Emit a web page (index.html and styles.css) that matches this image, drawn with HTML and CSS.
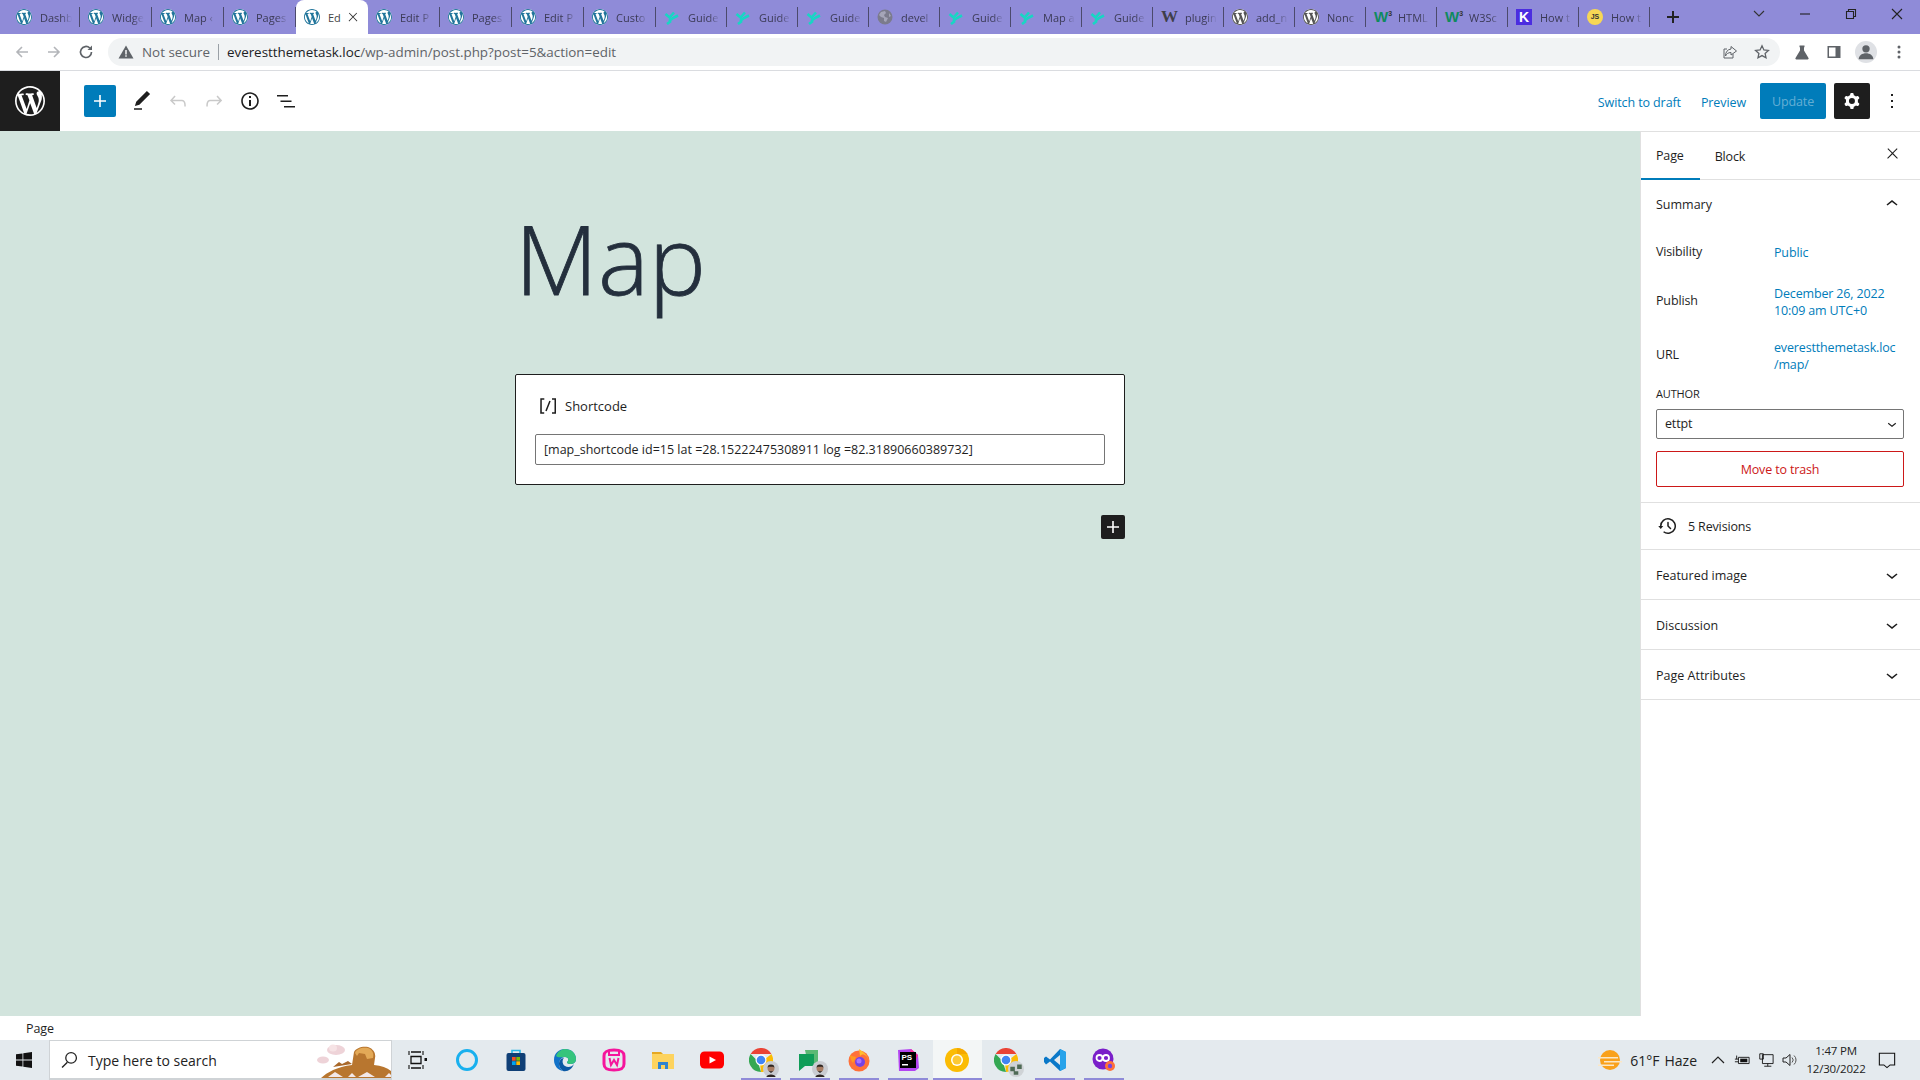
FILE: index.html
```html
<!DOCTYPE html>
<html lang="en">
<head>
    <meta charset="UTF-8">
    <title>Edit Page - Map</title>
    <link rel="stylesheet" href="styles.css">
</head>
<body>
    <svg class="sprites" width="0" height="0">
        <symbol id="i-wp" viewBox="0 0 20 20"><path d="M20 10c0-5.51-4.49-10-10-10C4.48 0 0 4.49 0 10c0 5.52 4.48 10 10 10 5.51 0 10-4.48 10-10zM7.78 15.37L4.37 6.22c.55-.02 1.17-.08 1.17-.08.5-.06.44-1.13-.06-1.11 0 0-1.45.11-2.37.11-.18 0-.37 0-.58-.01C4.12 2.69 6.87 1.11 10 1.11c2.33 0 4.45.87 6.05 2.34-.68-.11-1.65.39-1.65 1.58 0 .74.45 1.36.9 2.1.35.61.55 1.36.55 2.46 0 1.49-1.4 5-1.4 5l-3.03-8.37c.54-.02.82-.17.82-.17.5-.05.44-1.25-.06-1.22 0 0-1.44.12-2.38.12-.87 0-2.33-.12-2.33-.12-.5-.03-.56 1.2-.06 1.22l.92.08 1.26 3.41zM17.41 10c.24-.64.74-1.87.43-4.25.7 1.29 1.05 2.71 1.05 4.25 0 3.29-1.73 6.24-4.4 7.78.97-2.59 1.94-5.2 2.92-7.78zM6.1 18.09C3.12 16.65 1.11 13.53 1.11 10c0-1.3.23-2.48.72-3.59C3.25 10.3 4.67 14.2 6.1 18.09zm4.03-6.63l2.58 6.98c-.86.29-1.76.45-2.71.45-.79 0-1.57-.11-2.29-.33.81-2.38 1.62-4.74 2.42-7.1z"/></symbol>
        <symbol id="i-wpfav" viewBox="0 0 20 20"><circle cx="10" cy="10" r="10" fill="#fff"/><path fill="#21759b" d="M20 10c0-5.51-4.49-10-10-10C4.48 0 0 4.49 0 10c0 5.52 4.48 10 10 10 5.51 0 10-4.48 10-10zM7.78 15.37L4.37 6.22c.55-.02 1.17-.08 1.17-.08.5-.06.44-1.13-.06-1.11 0 0-1.45.11-2.37.11-.18 0-.37 0-.58-.01C4.12 2.69 6.87 1.11 10 1.11c2.33 0 4.45.87 6.05 2.34-.68-.11-1.65.39-1.65 1.58 0 .74.45 1.36.9 2.1.35.61.55 1.36.55 2.46 0 1.49-1.4 5-1.4 5l-3.03-8.37c.54-.02.82-.17.82-.17.5-.05.44-1.25-.06-1.22 0 0-1.44.12-2.38.12-.87 0-2.33-.12-2.33-.12-.5-.03-.56 1.2-.06 1.22l.92.08 1.26 3.41zM17.41 10c.24-.64.74-1.87.43-4.25.7 1.29 1.05 2.71 1.05 4.25 0 3.29-1.73 6.24-4.4 7.78.97-2.59 1.94-5.2 2.92-7.78zM6.1 18.09C3.12 16.65 1.11 13.53 1.11 10c0-1.3.23-2.48.72-3.59C3.25 10.3 4.67 14.2 6.1 18.09zm4.03-6.63l2.58 6.98c-.86.29-1.76.45-2.71.45-.79 0-1.57-.11-2.29-.33.81-2.38 1.62-4.74 2.42-7.1z"/></symbol>
        <symbol id="i-wpgray" viewBox="0 0 20 20"><circle cx="10" cy="10" r="10" fill="#fff"/><path fill="#555" d="M20 10c0-5.51-4.49-10-10-10C4.48 0 0 4.49 0 10c0 5.52 4.48 10 10 10 5.51 0 10-4.48 10-10zM7.78 15.37L4.37 6.22c.55-.02 1.17-.08 1.17-.08.5-.06.44-1.13-.06-1.11 0 0-1.45.11-2.37.11-.18 0-.37 0-.58-.01C4.12 2.69 6.87 1.11 10 1.11c2.33 0 4.45.87 6.05 2.34-.68-.11-1.65.39-1.65 1.58 0 .74.45 1.36.9 2.1.35.61.55 1.36.55 2.46 0 1.49-1.4 5-1.4 5l-3.03-8.37c.54-.02.82-.17.82-.17.5-.05.44-1.25-.06-1.22 0 0-1.44.12-2.38.12-.87 0-2.33-.12-2.33-.12-.5-.03-.56 1.2-.06 1.22l.92.08 1.26 3.41zM17.41 10c.24-.64.74-1.87.43-4.25.7 1.29 1.05 2.71 1.05 4.25 0 3.29-1.73 6.24-4.4 7.78.97-2.59 1.94-5.2 2.92-7.78zM6.1 18.09C3.12 16.65 1.11 13.53 1.11 10c0-1.3.23-2.48.72-3.59C3.25 10.3 4.67 14.2 6.1 18.09zm4.03-6.63l2.58 6.98c-.86.29-1.76.45-2.71.45-.79 0-1.57-.11-2.29-.33.81-2.38 1.62-4.74 2.42-7.1z"/></symbol>
        <symbol id="i-guide" viewBox="0 0 16 16"><path fill="none" stroke="#17d6c4" stroke-width="2.600" d="M1.500 5l4 3.500L10 3.500M5 12l4-3 5-2.500M3 15l4-3"/></symbol>
        <symbol id="i-globe" viewBox="0 0 16 16"><circle cx="8" cy="8" r="7.500" fill="#7b7b8c"/><path fill="#a5a5b8" d="M4 3l4-1 1 2-2 2 1 2 3 1-2 4-2-1V9L4 8 2 6zM12 4l2 3-2 1z"/></symbol>
        <symbol id="i-pencil" viewBox="0 0 24 24"><path d="M20.1 5.1L16.9 2 6.2 12.7l-1.3 4.4 4.5-1.3L20.1 5.1zM4 20.8h8v-1.5H4v1.5z"/></symbol>
        <symbol id="i-undo" viewBox="0 0 24 24"><path d="M18.3 11.7c-.6-.6-1.4-.9-2.3-.9H6.7l2.9-3.3-1.1-1-4.5 5L8.5 16l1-1-2.7-2.7H16c.5 0 .9.2 1.3.5 1 1 1 3.4 1 4.5v.3h1.5v-.2c0-1.5 0-4.3-1.5-5.7z"/></symbol>
        <symbol id="i-redo" viewBox="0 0 24 24"><path d="M15.6 6.5l-1.1 1 2.9 3.3H8c-.9 0-1.7.3-2.3.9-1.4 1.5-1.4 4.2-1.4 5.6v.2h1.5v-.3c0-1.1 0-3.5 1-4.5.3-.3.7-.5 1.3-.5h9.2L14.5 15l1.1 1.1 4.6-4.6-4.6-5z"/></symbol>
        <symbol id="i-info" viewBox="0 0 24 24"><path d="M12 3.2c-4.8 0-8.8 3.9-8.8 8.8 0 4.8 3.9 8.8 8.8 8.8 4.8 0 8.8-3.9 8.8-8.8 0-4.8-4-8.8-8.8-8.8zm0 16c-4 0-7.2-3.3-7.2-7.2C4.8 8 8 4.8 12 4.8s7.2 3.3 7.2 7.2c0 4-3.2 7.2-7.2 7.2zM11 17h2v-6h-2v6zm0-8h2V7h-2v2z"/></symbol>
        <symbol id="i-list" viewBox="0 0 24 24"><path d="M3 6h11v1.5H3V6zm3.5 5.5h11V13h-11v-1.5zM21 17H10v1.5h11V17z"/></symbol>
        <symbol id="i-plus" viewBox="0 0 24 24"><path d="M18 11.2h-5.2V6h-1.6v5.2H6v1.6h5.2V18h1.6v-5.2H18z"/></symbol>
        <symbol id="i-cog" viewBox="0 0 24 24"><path fill-rule="evenodd" d="M10.289 4.836A1 1 0 0 1 11.275 4h1.306a1 1 0 0 1 .987.836l.244 1.466c.787.26 1.503.679 2.108 1.218l1.393-.522a1 1 0 0 1 1.216.437l.653 1.13a1 1 0 0 1-.23 1.273l-1.148.944a6.025 6.025 0 0 1 0 2.435l1.149.946a1 1 0 0 1 .23 1.272l-.653 1.13a1 1 0 0 1-1.216.437l-1.394-.522c-.605.54-1.32.958-2.108 1.218l-.244 1.466a1 1 0 0 1-.987.836h-1.306a1 1 0 0 1-.986-.836l-.244-1.466a5.995 5.995 0 0 1-2.108-1.218l-1.394.522a1 1 0 0 1-1.217-.436l-.653-1.131a1 1 0 0 1 .23-1.272l1.149-.946a6.026 6.026 0 0 1 0-2.435l-1.148-.944a1 1 0 0 1-.23-1.272l.653-1.131a1 1 0 0 1 1.217-.437l1.393.522a5.994 5.994 0 0 1 2.108-1.218l.244-1.466ZM14.929 12a3 3 0 1 1-6 0 3 3 0 0 1 6 0Z"/></symbol>
        <symbol id="i-more" viewBox="0 0 24 24"><path d="M13 19h-2v-2h2v2zm0-6h-2v-2h2v2zm0-6h-2V5h2v2z"/></symbol>
        <symbol id="i-close" viewBox="0 0 24 24"><path d="M13 11.8l6.1-6.3-1-1-6.1 6.2-6.1-6.2-1 1 6.1 6.3-6.5 6.7 1 1 6.5-6.6 6.5 6.6 1-1z"/></symbol>
        <symbol id="i-down" viewBox="0 0 24 24"><path d="M17.5 11.6L12 16l-5.5-4.4.9-1.2L12 14l4.5-3.6 1 1.2z"/></symbol>
        <symbol id="i-up" viewBox="0 0 24 24"><path d="M6.5 12.4L12 8l5.5 4.4-.9 1.2L12 10l-4.5 3.6-1-1.2z"/></symbol>
        <symbol id="i-history" viewBox="0 0 24 24"><path d="M5.5 12h1.75l-2.5 3-2.5-3H4a8 8 0 113.134 6.35l.907-1.194A6.5 6.5 0 105.5 12zm9.53 1.97l-2.28-2.28V8.5a.75.75 0 00-1.5 0V12a.747.747 0 00.218.529l2.5 2.5a.75.75 0 101.062-1.059z"/></symbol>
        <symbol id="i-shortcode" viewBox="0 0 24 24"><path d="M16 4.2v1.5h2.5v12.5H16v1.5h4V4.2h-4zM4.2 19.8h4v-1.5H5.8V5.8h2.5V4.2h-4l-.1 15.6zm5.1-3.1l1.4.6 4-10-1.4-.6-4 10z"/></symbol>
        <symbol id="i-chrome" viewBox="0 0 24 24"><path fill="#ea4335" d="M1.6 6a12 12 0 0 1 20.800 0H12z"/><path fill="#fbbc04" d="M22.400 6A12 12 0 0 1 12 24l-1-9z"/><path fill="#34a853" d="M12 24A12 12 0 0 1 1.600 6l7 7z"/><circle cx="12" cy="12" r="5.500" fill="#fff"/><circle cx="12" cy="12" r="4.300" fill="#4285f4"/></symbol>
        <symbol id="i-face" viewBox="0 0 14 14"><circle cx="7" cy="7" r="7" fill="#c9ccd1"/><circle cx="7" cy="6.500" r="3" fill="#a87d63"/><path fill="#2d2622" d="M4 6a3 3 0 0 1 6 0L9 5H5zM5 9h4l-2 1.500zM3 14c0-3 8-3 8 0z"/></symbol>
        <symbol id="i-group" viewBox="0 0 14 14"><circle cx="7" cy="7" r="7" fill="#cfd3d6"/><path fill="#4f6a55" d="M2 5h4v4H2zM8 3h4v4H8zM5 9h4v3H5z"/></symbol>
    </svg>

    <div class="tabbar">
        <div class="tab"><svg class="fav"><use href="#i-wpfav"/></svg><span class="tab-title">Dashb</span></div>
        <div class="tab"><svg class="fav"><use href="#i-wpfav"/></svg><span class="tab-title">Widge</span></div>
        <div class="tab"><svg class="fav"><use href="#i-wpfav"/></svg><span class="tab-title">Map &lsaquo;</span></div>
        <div class="tab"><svg class="fav"><use href="#i-wpfav"/></svg><span class="tab-title">Pages</span></div>
        <div class="tab tab-active"><svg class="fav"><use href="#i-wpfav"/></svg><span class="tab-title">Ed</span><svg class="tab-close"><use href="#i-close"/></svg></div>
        <div class="tab"><svg class="fav"><use href="#i-wpfav"/></svg><span class="tab-title">Edit P</span></div>
        <div class="tab"><svg class="fav"><use href="#i-wpfav"/></svg><span class="tab-title">Pages</span></div>
        <div class="tab"><svg class="fav"><use href="#i-wpfav"/></svg><span class="tab-title">Edit P</span></div>
        <div class="tab"><svg class="fav"><use href="#i-wpfav"/></svg><span class="tab-title">Custo</span></div>
        <div class="tab"><svg class="fav"><use href="#i-guide"/></svg><span class="tab-title">Guide</span></div>
        <div class="tab"><svg class="fav"><use href="#i-guide"/></svg><span class="tab-title">Guide</span></div>
        <div class="tab"><svg class="fav"><use href="#i-guide"/></svg><span class="tab-title">Guide</span></div>
        <div class="tab"><svg class="fav"><use href="#i-globe"/></svg><span class="tab-title">devel</span></div>
        <div class="tab"><svg class="fav"><use href="#i-guide"/></svg><span class="tab-title">Guide</span></div>
        <div class="tab"><svg class="fav"><use href="#i-guide"/></svg><span class="tab-title">Map a</span></div>
        <div class="tab"><svg class="fav"><use href="#i-guide"/></svg><span class="tab-title">Guide</span></div>
        <div class="tab"><span class="fav fav-w">W</span><span class="tab-title">plugin</span></div>
        <div class="tab"><svg class="fav"><use href="#i-wpgray"/></svg><span class="tab-title">add_n</span></div>
        <div class="tab"><svg class="fav"><use href="#i-wpgray"/></svg><span class="tab-title">Nonc</span></div>
        <div class="tab"><span class="fav fav-w3">W<sup>3</sup></span><span class="tab-title">HTML</span></div>
        <div class="tab"><span class="fav fav-w3">W<sup>3</sup></span><span class="tab-title">W3Sc</span></div>
        <div class="tab"><span class="fav fav-k">K</span><span class="tab-title">How t</span></div>
        <div class="tab"><span class="fav fav-js">JS</span><span class="tab-title">How t</span></div>
        <svg class="tab-new" viewBox="0 0 16 16"><path d="M7 2h2v5h5v2H9v5H7V9H2V7h5z"/></svg>
        <div class="win-controls">
            <svg viewBox="0 0 16 16"><path d="M3 5l5 5 5-5" fill="none" stroke="#333" stroke-width="1.100"/></svg>
            <svg viewBox="0 0 16 16"><path d="M3 8h10" stroke="#222" stroke-width="1.100"/></svg>
            <svg viewBox="0 0 16 16"><path d="M3.500 5.500h7v7h-7zM5.500 5.500v-2h7v7h-2" fill="none" stroke="#222" stroke-width="1.100"/></svg>
            <svg viewBox="0 0 16 16"><path d="M3 3l10 10M13 3L3 13" stroke="#222" stroke-width="1.100"/></svg>
        </div>
    </div>

    <div class="toolbar">
        <svg class="nav-btn" viewBox="0 0 16 16"><path d="M14 8H3M8 3L3 8l5 5" fill="none" stroke="#b3b5b9" stroke-width="1.600"/></svg>
        <svg class="nav-btn" viewBox="0 0 16 16"><path d="M2 8h11M8 3l5 5-5 5" fill="none" stroke="#b3b5b9" stroke-width="1.600"/></svg>
        <svg class="nav-btn" viewBox="0 0 16 16"><path d="M13.500 8A5.500 5.500 0 1 1 11.800 4" fill="none" stroke="#5f6368" stroke-width="1.700"/><path d="M14 1.500V6H9.500z" fill="#5f6368"/></svg>
        <div class="omnibox">
            <svg class="warn" viewBox="0 0 16 16"><path d="M8 1.500L15.500 14.500H.5z" fill="#5f6368"/><path d="M7.300 6h1.400v4.500H7.300zM7.300 11.300h1.400v1.400H7.300z" fill="#fff"/></svg>
            <span class="not-secure">Not secure</span>
            <span class="omni-sep"></span>
            <span class="url"><b>everestthemetask.loc</b>/wp-admin/post.php?post=5&amp;action=edit</span>
            <svg class="omni-icon" viewBox="0 0 16 16"><path d="M9 2.500l5.500 4.500L9 11V8.500C6 8.500 4.500 10 3.500 12c0-4 2-6.500 5.500-7zM11 10v4H2V5h3" fill="none" stroke="#5f6368" stroke-width="1"/></svg>
            <svg class="omni-icon" viewBox="0 0 16 16"><path d="M8 1.800l1.900 4.100 4.500.5-3.300 3 .9 4.400L8 11.600l-4 2.200.9-4.400-3.300-3 4.500-.5z" fill="none" stroke="#5f6368" stroke-width="1.300"/></svg>
        </div>
        <svg class="tool-icon" viewBox="0 0 16 16"><path d="M5.500 1.500h5v1.500l-.5.500v3L14.500 14a1 1 0 0 1-1 1.500h-11A1 1 0 0 1 1.500 14L6 6.500v-3L5.500 3z" fill="#5f6368"/></svg>
        <svg class="tool-icon tool-panel" viewBox="0 0 16 16"><path d="M1.500 2h13v12h-13z" fill="#5f6368"/><path d="M3 3.500h6.500v9H3z" fill="#fff"/></svg>
        <div class="avatar"><svg viewBox="0 0 24 24"><circle cx="12" cy="8.500" r="4" fill="#5f6368"/><path d="M4 20c0-9 16-9 16 0z" fill="#5f6368"/></svg></div>
        <svg class="tool-icon tool-dots" viewBox="0 0 16 16"><circle cx="8" cy="3" r="1.500" fill="#5f6368"/><circle cx="8" cy="8" r="1.500" fill="#5f6368"/><circle cx="8" cy="13" r="1.500" fill="#5f6368"/></svg>
    </div>

    <header class="admin-bar">
        <a class="wp-logo"><svg><use href="#i-wp"/></svg></a>
        <button class="inserter"><svg><use href="#i-plus"/></svg></button>
        <button class="bar-icon"><svg><use href="#i-pencil"/></svg></button>
        <button class="bar-icon bar-off"><svg><use href="#i-undo"/></svg></button>
        <button class="bar-icon bar-off"><svg><use href="#i-redo"/></svg></button>
        <button class="bar-icon"><svg><use href="#i-info"/></svg></button>
        <button class="bar-icon"><svg><use href="#i-list"/></svg></button>
        <div class="bar-right">
            <a class="bar-link">Switch to draft</a>
            <a class="bar-link">Preview</a>
            <button class="update">Update</button>
            <button class="settings"><svg><use href="#i-cog"/></svg></button>
            <button class="bar-more"><svg><use href="#i-more"/></svg></button>
        </div>
    </header>

    <div class="main">
        <main class="canvas">
            <div class="column">
                <h1 class="post-title">Map</h1>
                <div class="block">
                    <div class="block-label"><svg><use href="#i-shortcode"/></svg><span>Shortcode</span></div>
                    <div class="block-input">[map_shortcode id=15 lat =28.15222475308911 log =82.31890660389732]</div>
                </div>
                <div class="append-row"><button class="append"><svg><use href="#i-plus"/></svg></button></div>
            </div>
        </main>

        <aside class="sidebar">
            <div class="side-tabs">
                <span class="side-tab side-tab-on">Page</span>
                <span class="side-tab">Block</span>
                <svg class="side-close"><use href="#i-close"/></svg>
            </div>
            <section class="summary">
                <div class="panel-head"><span>Summary</span><svg><use href="#i-up"/></svg></div>
                <div class="row row-visibility"><span class="row-label">Visibility</span><a class="row-value">Public</a></div>
                <div class="row row-publish"><span class="row-label">Publish</span><a class="row-value">December 26, 2022<br>10:09 am UTC+0</a></div>
                <div class="row row-url"><span class="row-label">URL</span><a class="row-value">everestthemetask.loc<br>/map/</a></div>
                <div class="author-label">AUTHOR</div>
                <div class="author-select"><span>ettpt</span><svg><use href="#i-down"/></svg></div>
                <button class="trash">Move to trash</button>
            </section>
            <div class="revisions"><svg><use href="#i-history"/></svg><span>5 Revisions</span></div>
            <div class="panel-closed"><span>Featured image</span><svg><use href="#i-down"/></svg></div>
            <div class="panel-closed"><span>Discussion</span><svg><use href="#i-down"/></svg></div>
            <div class="panel-closed"><span>Page Attributes</span><svg><use href="#i-down"/></svg></div>
        </aside>
    </div>

    <div class="statusbar">Page</div>

    <footer class="taskbar">
        <svg class="start" viewBox="0 0 16 16"><path fill="#111" d="M0 2.300l6.500-.9v6.200H0zM7.300 1.300L16 0v7.600H7.300zM0 8.400h6.500v6.200L0 13.700zM7.300 8.400H16V16l-8.700-1.300z"/></svg>
        <div class="search">
            <svg class="search-glass" viewBox="0 0 16 16"><circle cx="9.500" cy="6.500" r="5" fill="none" stroke="#222" stroke-width="1.200"/><path d="M6 10.500L1 15.500" stroke="#222" stroke-width="1.300"/></svg>
            <span class="search-text">Type here to search</span>
            <svg class="search-art" viewBox="0 0 72 38">
                <ellipse cx="16" cy="9" rx="9" ry="5" fill="#eed3d8"/><ellipse cx="13" cy="7" rx="4" ry="3.500" fill="#f6e3e5"/>
                <ellipse cx="3" cy="19" rx="6" ry="3.500" fill="#eed3d8"/>
                <path d="M13 26l6-5 3 2 6-3 4 3z" fill="#a9682a"/>
                <path d="M0 38c6-6 16-12 32-14l2-13c2-4 8-6 14-5 6 2 8 7 7 11l-1 7c8 1 14 3 18 7v7z" fill="#b8762f"/>
                <path d="M35 12c1-4 7-6 13-5 5 2 6 6 5 10l-6 1-2-5-6-1-2 3z" fill="#e3a957"/>
                <path d="M8 36l7-5 8 5zM28 36l4-4 4 4zM38 36l9-5 8 5zM65 36l4-4 3 3v1z" fill="#f3e8e8"/>
            </svg>
        </div>
        <div class="apps">
            <span class="app app-first"><svg viewBox="0 0 24 24"><path d="M6 4h10M6 20h10M6 8.500h10v7H6z" fill="none" stroke="#111" stroke-width="1.300"/><path d="M4 3v4M18 3v4M4 17v4M18 17v4" stroke="#111" stroke-width="1.100"/><rect x="19.500" y="10" width="2.500" height="3" fill="#111"/></svg></span>
            <span class="app"><svg viewBox="0 0 24 24"><circle cx="12" cy="12" r="9.500" fill="none" stroke="#19b0ee" stroke-width="3"/></svg></span>
            <span class="app"><svg viewBox="0 0 24 24"><path d="M8 5V2.500h8V5" fill="none" stroke="#27b8e8" stroke-width="1.600"/><rect x="2.500" y="5" width="19" height="18" rx="2" fill="#0f3f76"/><rect x="8" y="9" width="3.700" height="3.700" fill="#f25022"/><rect x="12.300" y="9" width="3.700" height="3.700" fill="#7fba00"/><rect x="8" y="13.300" width="3.700" height="3.700" fill="#00a4ef"/><rect x="12.300" y="13.300" width="3.700" height="3.700" fill="#ffb900"/></svg></span>
            <span class="app"><svg viewBox="0 0 24 24"><path d="M1 12C1 5 6 1 12 1c6 0 11 4 11 10 0 4-3 5-6 5-2 0-3-1-3-2 2-1 2-5-2-5-4 0-6 4-6 7 0 2 1 5 4 7C5 22 1 18 1 12z" fill="#1172c9"/><path d="M3 8c2-5 6-7 9-7 6 0 11 4 11 10 0 4-3 5-6 5-2 0-3-1-3-2 2-1 2-5-2-5-4 0-7 1-9-1z" fill="#35c47c"/><path d="M10 23c-3-2-4-5-4-7 0-3 2-6 5-6-2 2-2 6 1 8 3 2 7 1 9-2-2 5-6 8-11 7z" fill="#0c59a4"/></svg></span>
            <span class="app"><svg viewBox="0 0 24 24"><path d="M2 8c0-4 2-6 10-6s10 2 10 6v8c0 4-2 6-10 6S2 20 2 16z" fill="none" stroke="#f5169c" stroke-width="3"/><path d="M7 2v5h10V2" fill="none" stroke="#f5169c" stroke-width="2"/><path d="M7.500 10l1.500 7 3-5 3 5 1.500-7" fill="none" stroke="#f5169c" stroke-width="2"/></svg></span>
            <span class="app"><svg viewBox="0 0 24 24"><path d="M1 4h9l2 2h-11z" fill="#e5a823"/><path d="M1 6h22v15H1z" fill="#fdd35e"/><path d="M7 14h10v7H7z" fill="#2f84d0"/><path d="M10 17h4v4h-4z" fill="#fdd35e"/></svg></span>
            <span class="app"><svg viewBox="0 0 24 24"><rect y="3.500" width="24" height="17" rx="4.500" fill="#f00"/><path d="M9.500 8.500l6.500 3.500-6.500 3.500z" fill="#fff"/></svg></span>
            <span class="app app-open"><svg class="app-main"><use href="#i-chrome"/></svg><svg class="app-badge"><use href="#i-face"/></svg></span>
            <span class="app app-open"><svg viewBox="0 0 24 24"><path d="M7 2h13v14H10z" fill="#5bb974"/><path d="M1 6h15v12H7l-6 5z" fill="#0f9d58"/></svg><svg class="app-badge"><use href="#i-face"/></svg></span>
            <span class="app app-open"><svg viewBox="0 0 24 24"><circle cx="12" cy="13" r="10.500" fill="#ff7139"/><path d="M12 1c5 3 9 7 10 12C20 6 15 5 13 8z" fill="#ffbd2e"/><path d="M3 6c1 3 4 2 6 3l-3 6C4 13 3 10 3 6z" fill="#ff9a1f"/><circle cx="13" cy="14" r="5" fill="#7542e5"/><circle cx="12" cy="13" r="2.500" fill="#ab71ff"/></svg></span>
            <span class="app app-open"><svg viewBox="0 0 24 24"><path d="M2 2l13-1 7 6 1 13-4 3H3z" fill="#b345f1"/><path d="M15 1l7 6-3 7-7-3z" fill="#ff2e93"/><rect x="4" y="4" width="16" height="16" fill="#000"/><text x="5.500" y="12" class="ps-label">PS</text><rect x="6" y="16" width="6" height="1.500" fill="#fff"/></svg></span>
            <span class="app app-open app-current"><svg viewBox="0 0 24 24"><circle cx="12" cy="12" r="12" fill="#fbbc04"/><path d="M12 0a12 12 0 0 1 10.400 6H12z" fill="#f5a800"/><circle cx="12" cy="12" r="6" fill="#fff"/><circle cx="12" cy="12" r="4.500" fill="#fcc934"/></svg></span>
            <span class="app"><svg class="app-main"><use href="#i-chrome"/></svg><svg class="app-badge"><use href="#i-group"/></svg></span>
            <span class="app app-open"><svg viewBox="0 0 24 24"><path d="M17 1l6 3v16l-6 3-10-9.500-4 3L1 14v-4l2-1.500 4 3z" fill="#0a78c8"/><path d="M17 1l6 3v16l-6 3z" fill="#28a3ea"/><path d="M17 7l-6 5 6 5z" fill="#e3e9ee"/></svg></span>
            <span class="app app-open"><svg viewBox="0 0 24 24"><circle cx="11" cy="11" r="10.500" fill="#7a1fc9"/><circle cx="7.500" cy="10" r="3" fill="none" stroke="#fff" stroke-width="1.800"/><circle cx="14" cy="10" r="3" fill="none" stroke="#fff" stroke-width="1.800"/><circle cx="18" cy="18" r="5" fill="#ff7139"/><circle cx="18" cy="18" r="2.200" fill="#7542e5"/></svg></span>
        </div>
        <div class="tray">
            <svg class="weather" viewBox="0 0 24 24"><circle cx="12" cy="12" r="10" fill="#f9a11b"/><path d="M0 9h20v1.500H0zM6 13h18v1.500H6zM0 16.500h16V18H0z" fill="#fbe7c5"/></svg>
            <span class="temp">61°F</span>
            <span class="haze">Haze</span>
            <svg class="tray-icon" viewBox="0 0 16 16"><path d="M2 11l6-6 6 6" fill="none" stroke="#222" stroke-width="1.200"/></svg>
            <svg class="tray-icon" viewBox="0 0 18 16"><path d="M5 5h12v7H5zM1 7h4M1 10h4" fill="none" stroke="#111" stroke-width="1"/><path d="M7 6.500h8v4H7z" fill="#111"/><path d="M3 3v4" stroke="#111"/></svg>
            <svg class="tray-icon" viewBox="0 0 18 16"><path d="M5 2h12v10H5zM2 1h4v6H2zM11 12v3M7 15h8" fill="#e3e9ee" stroke="#111" stroke-width="1"/></svg>
            <svg class="tray-icon" viewBox="0 0 16 16"><path d="M1 6h3l4-3.500v11L4 10H1z" fill="none" stroke="#222"/><path d="M10 5.500a3.500 3.500 0 0 1 0 5M12 3.500a6 6 0 0 1 0 9" fill="none" stroke="#555"/></svg>
            <div class="clock"><span>1:47 PM</span><span>12/30/2022</span></div>
            <svg class="notify" viewBox="0 0 20 20"><path d="M1.500 2.500h17v13h-5l-3.500 3-3.500-3h-5z" fill="none" stroke="#111" stroke-width="1.200"/></svg>
        </div>
    </footer>
</body>
</html>
```

FILE: styles.css
```css
* { box-sizing: border-box; }

html, body {
    margin: 0;
    height: 100%;
}

body {
    display: flex;
    flex-direction: column;
    height: 1080px;
    overflow: hidden;
    background: #fff;
    color: #1e1e1e;
    font: 12.500px "Open Sans", "Noto Sans", sans-serif;
    letter-spacing: -0.1px;
}

button {
    font: inherit;
    letter-spacing: inherit;
    border: 0;
    padding: 0;
    background: none;
    color: inherit;
}

.sprites { position: absolute; }

svg { display: block; fill: currentColor; }

/* Chrome tab strip */

.tabbar {
    display: flex;
    align-items: center;
    height: 34px;
    padding-left: 8px;
    background: #8f8bd8;
    flex: none;
    letter-spacing: 0;
}

.tab {
    position: relative;
    display: flex;
    align-items: center;
    width: 71px;
    height: 34px;
    padding-left: 8px;
    flex: none;
}

.tab:nth-child(-n+9) { width: 72px; }

.tab::after {
    content: "";
    position: absolute;
    right: 0;
    top: 7px;
    height: 20px;
    width: 1px;
    background: #4c4a6c;
}

.tab-active {
    background: #fff;
    border-radius: 8px 8px 0 0;
}

.tab-active::after { display: none; }

.fav {
    width: 16px;
    height: 16px;
    flex: none;
}

.fav-w {
    font: bold 17px/16px "Liberation Serif", serif;
    color: #3f3f4a;
    text-align: center;
}

.fav-w3 {
    font: bold 15px/16px "Liberation Sans", sans-serif;
    color: #0f8a5f;
    white-space: nowrap;
}

.fav-w3 sup {
    font-size: 7px;
    line-height: 0;
    color: #333;
}

.fav-k {
    background: #4b2de0;
    color: #fff;
    font: bold 14px/16px "Liberation Sans", sans-serif;
    text-align: center;
}

.fav-js {
    background: #f7d755;
    border-radius: 50%;
    color: #333;
    font: bold 7px/16px "Liberation Sans", sans-serif;
    text-align: center;
}

.tab-title {
    width: 32px;
    margin-left: 8px;
    overflow: hidden;
    white-space: nowrap;
    font-size: 11px;
    color: #3b3a55;
    -webkit-mask-image: linear-gradient(90deg, #000 65%, transparent);
    mask-image: linear-gradient(90deg, #000 65%, transparent);
}

.tab-active .tab-title {
    width: 14px;
    color: #444;
    -webkit-mask-image: none;
    mask-image: none;
}

.tab-close {
    width: 14px;
    height: 14px;
    margin-left: 4px;
    color: #333;
}

.tab-new {
    width: 16px;
    height: 16px;
    margin-left: 15px;
    fill: #222;
    flex: none;
}

.win-controls {
    display: flex;
    margin-left: auto;
    padding-right: 15px;
    gap: 30px;
    transform: translateY(-3px);
}

.win-controls svg {
    width: 16px;
    height: 16px;
}

/* Chrome toolbar */

.toolbar {
    display: flex;
    align-items: center;
    height: 37px;
    padding: 0 0 1px 14px;
    border-bottom: 1px solid #dadce0;
    flex: none;
    letter-spacing: 0;
}

.nav-btn {
    width: 16px;
    height: 16px;
    margin-right: 16px;
    flex: none;
}

.omnibox {
    display: flex;
    align-items: center;
    width: 1672px;
    height: 28px;
    margin-left: -2px;
    padding: 0 10px;
    border-radius: 14px;
    background: #f1f3f4;
    color: #5f6368;
    font-size: 13.400px;
    flex: none;
}

.warn {
    width: 16px;
    height: 16px;
    margin-right: 8px;
}

.omni-sep {
    width: 1px;
    height: 16px;
    margin: 0 8px;
    background: #9aa0a6;
}

.url { flex: 1; }

.url b {
    font-weight: 400;
    color: #202124;
}

.omni-icon {
    width: 16px;
    height: 16px;
    margin-left: 16px;
}

.tool-icon {
    width: 16px;
    height: 16px;
    margin-left: 14px;
    flex: none;
}

.tool-panel { margin-left: 16px; }

.avatar {
    width: 22px;
    height: 22px;
    margin-left: 13px;
    border-radius: 50%;
    background: #dfe1e5;
    flex: none;
}

.tool-dots { margin-left: 14px; }

/* WordPress top bar */

.admin-bar {
    display: flex;
    align-items: center;
    height: 60px;
    flex: none;
}

.wp-logo {
    display: flex;
    align-items: center;
    justify-content: center;
    width: 60px;
    height: 60px;
    background: #1e1e1e;
    color: #fff;
}

.wp-logo svg {
    width: 30px;
    height: 30px;
}

.inserter {
    display: flex;
    align-items: center;
    justify-content: center;
    width: 32px;
    height: 32px;
    margin: 0 8px 0 24px;
    background: #007cba;
    border-radius: 2px;
    color: #fff;
}

.inserter svg,
.bar-icon svg,
.settings svg,
.bar-more svg {
    width: 24px;
    height: 24px;
}

.bar-icon {
    display: flex;
    align-items: center;
    justify-content: center;
    width: 36px;
    height: 36px;
}

.bar-off { color: #c9c9c9; }

.bar-right {
    display: flex;
    align-items: center;
    margin-left: auto;
    padding-right: 16px;
}

.bar-link {
    margin: 2px 20px 0 0;
    color: #007cba;
}

.bar-link + .bar-link { margin-right: 14px; }

.update {
    width: 66px;
    height: 36px;
    margin-right: 8px;
    padding-top: 1px;
    background: #007cba;
    border-radius: 2px;
    color: rgba(255, 255, 255, 0.4);
}

.settings {
    display: flex;
    align-items: center;
    justify-content: center;
    width: 36px;
    height: 36px;
    margin-right: 10px;
    background: #1e1e1e;
    border-radius: 2px;
    color: #fff;
}

/* Editor canvas */

.main {
    display: flex;
    flex: 1;
    min-height: 0;
}

.canvas {
    flex: 1;
    background: #d2e4dd;
}

.column {
    width: 610px;
    margin: 0 auto;
}

.post-title {
    height: 243px;
    margin: 0;
    padding-top: 63px;
    font-size: 96px;
    font-weight: 300;
    line-height: 128px;
    letter-spacing: 0;
    color: #242f3d;
    -webkit-text-stroke: 0.8px #242f3d;
}

.block {
    height: 111px;
    padding: 19px 19px 0;
    background: #fff;
    border: 1px solid #1e1e1e;
    border-radius: 2px;
    letter-spacing: 0;
}

.block-label {
    display: flex;
    align-items: center;
    gap: 5px;
    height: 24px;
    margin-bottom: 16px;
    font-size: 13px;
}

.block-label svg {
    width: 24px;
    height: 24px;
    margin-left: 1px;
}

.block-input {
    height: 31px;
    padding: 0 8px;
    border: 1px solid #757575;
    border-radius: 2px;
    line-height: 30px;
}

.append-row {
    display: flex;
    justify-content: flex-end;
    padding-top: 30px;
}

.append {
    width: 24px;
    height: 24px;
    background: #1e1e1e;
    border-radius: 2px;
    color: #fff;
}

.append svg {
    width: 24px;
    height: 24px;
}

/* Settings sidebar */

.sidebar {
    width: 280px;
    background: #fff;
    border-left: 1px solid #e0e0e0;
    border-top: 1px solid #e0e0e0;
    letter-spacing: -0.15px;
}

.side-tabs {
    display: flex;
    align-items: center;
    height: 48px;
    border-bottom: 1px solid #e0e0e0;
}

.side-tab {
    display: flex;
    align-items: center;
    height: 48px;
    padding: 2px 16px 0 15px;
}

.side-tab-on {
    border-bottom: 2px solid #007cba;
}

.side-tab + .side-tab { padding-left: 15px; }

.side-close {
    width: 17px;
    height: 17px;
    margin-left: auto;
    margin-right: 19.500px;
    transform: translateY(-2px);
}

.summary {
    height: 323px;
    padding: 0 16px 0 15px;
    border-bottom: 1px solid #e0e0e0;
}

.panel-head,
.panel-closed {
    display: flex;
    align-items: center;
    justify-content: space-between;
    font-weight: 500;
    letter-spacing: 0;
}

.panel-head {
    height: 48px;
}

.panel-head svg,
.panel-closed svg {
    width: 24px;
    height: 24px;
}

.row {
    display: flex;
    align-items: center;
    min-height: 34px;
}

.row-visibility { margin-top: 7px; }
.row-publish { margin-top: 13.500px; }
.row-url { margin-top: 17px; }

.row-label {
    width: 118px;
    margin-top: -2px;
}

.row-value {
    margin-top: 2px;
    color: #007cba;
    line-height: 17.500px;
}

.author-label {
    margin-top: 12px;
    height: 16px;
    font-size: 11px;
    line-height: 16px;
}

.author-select {
    display: flex;
    align-items: center;
    justify-content: space-between;
    height: 30px;
    margin-top: 7px;
    padding: 0 0 0 8px;
    border: 1px solid #757575;
    border-radius: 2px;
}

.author-select svg {
    width: 18px;
    height: 18px;
    margin-right: 2px;
}

.trash {
    display: block;
    width: 100%;
    height: 36px;
    margin-top: 12px;
    padding-top: 1px;
    border: 1px solid #cc1818;
    border-radius: 2px;
    color: #cc1818;
}

.revisions {
    display: flex;
    align-items: center;
    height: 47px;
    padding-left: 15px;
    border-bottom: 1px solid #e0e0e0;
    font-weight: 500;
    gap: 8px;
}

.revisions svg {
    width: 24px;
    height: 24px;
}

.panel-closed {
    height: 50px;
    padding: 0 16px 0 15px;
    border-bottom: 1px solid #e0e0e0;
}

.panel-closed span { margin-top: 2px; }

.statusbar {
    height: 24px;
    padding: 1px 0 0 26px;
    flex: none;
    line-height: 24px;
}

/* Windows taskbar */

.taskbar {
    display: flex;
    align-items: center;
    height: 40px;
    background: #e4eaee;
    flex: none;
    letter-spacing: 0;
}

.start {
    width: 16px;
    height: 16px;
    margin: 0 17px 0 16px;
    flex: none;
}

.search {
    display: flex;
    align-items: center;
    width: 343px;
    height: 40px;
    padding-left: 11px;
    background: #fff;
    border: 1px solid #cfd3d6;
    border-bottom-width: 2px;
    font-size: 14px;
    color: #222;
    overflow: hidden;
}

.search-glass {
    width: 17px;
    height: 17px;
    margin-right: 10px;
}

.search-text { padding-top: 1px; }

.search-art {
    width: 72px;
    height: 38px;
    margin: 0 -1px 0 auto;
    flex: none;
    overflow: visible;
}

.apps { display: flex; }

.app {
    position: relative;
    display: flex;
    align-items: center;
    justify-content: center;
    width: 49px;
    height: 40px;
}

.app-first { margin-right: 1.500px; }

.app > svg:first-child {
    width: 24px;
    height: 24px;
}

.app-open::after {
    content: "";
    position: absolute;
    left: 4.500px;
    right: 4.500px;
    bottom: 0;
    height: 2px;
    background: #8f8bd8;
}

.app-current { background: #f3f6f6; }

.app-current::after {
    left: 0;
    right: 0;
}

.app-badge {
    position: absolute;
    right: 7px;
    bottom: 3px;
    width: 16px;
    height: 16px;
}

.ps-label {
    font: bold 8px "Liberation Sans", sans-serif;
    fill: #fff;
}

.tray {
    display: flex;
    align-items: center;
    margin-left: auto;
    padding-right: 5px;
    font-size: 14px;
    color: #222;
}

.weather {
    width: 24px;
    height: 24px;
    margin-right: 8px;
}

.temp { margin-right: 5px; }
.haze { margin-right: 13px; }

.tray-icon {
    width: 16px;
    height: 16px;
    margin-right: 8px;
}

.clock {
    display: flex;
    flex-direction: column;
    align-items: center;
    width: 70px;
    margin-left: -5px;
    font-size: 11.500px;
    letter-spacing: -0.2px;
    line-height: 18px;
}

.notify {
    width: 18px;
    height: 18px;
    margin: 0 19px 0 7px;
}
```
